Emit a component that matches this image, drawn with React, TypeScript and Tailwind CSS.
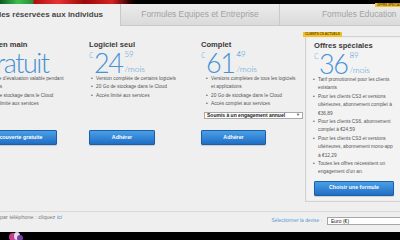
import React from "react";

type Plan = {
  title: string;
  whole: string;
  cents?: string;
  bullets: string[][];
  button: string;
  width: string;
  buttonWidth: string;
  indent: string;
  extra?: React.ReactNode;
};

const plans: Plan[] = [
  {
    title: "Prise en main",
    whole: "Gratuit",
    bullets: [
      ["Période d'évaluation valable pendant", "30 jours"],
      ["2 Go de stockage dans le Cloud"],
      ["Accès limité aux services"],
    ],
    button: "Découverte gratuite",
    width: "w-[111px]",
    buttonWidth: "w-[79px]",
    indent: "ml-[0px]",
  },
  {
    title: "Logiciel seul",
    whole: "24",
    cents: "59",
    bullets: [
      ["Version complète de certains logiciels"],
      ["20 Go de stockage dans le Cloud"],
      ["Accès limité aux services"],
    ],
    button: "Adhérer",
    width: "w-[112px]",
    buttonWidth: "w-[66px]",
    indent: "ml-[0px]",
  },
  {
    title: "Complet",
    whole: "61",
    cents: "49",
    bullets: [
      ["Versions complètes de tous les logiciels", "et applications"],
      ["20 Go de stockage dans le Cloud"],
      ["Accès complet aux services"],
    ],
    button: "Adhérer",
    width: "w-[103px]",
    buttonWidth: "w-[65px]",
    indent: "ml-[3px]",
    extra: (
      <div className="mt-[3px] w-[99px] h-[7px] bg-white border border-[#a9a9a9] flex items-center justify-between px-[2px] text-[5px] leading-none font-bold text-[#222] whitespace-nowrap">
        <span>Soumis à un engagement annuel</span>
        <span className="text-[4px] text-[#555]">▼</span>
      </div>
    ),
  },
];

const special: string[][] = [
  ["Tarif promotionnel pour les clients", "existants"],
  ["Pour les clients CS3 et versions", "ultérieures, abonnement complet à", "€36,89"],
  ["Pour les clients CS6, abonnement", "complet à €24,59"],
  ["Pour les clients CS3 et versions", "ultérieures, abonnement mono-app", "à €12,29"],
  ["Toutes les offres nécessitent un", "engagement d'un an."],
];

function Price({ whole, cents }: { whole: string; cents?: string }) {
  if (!cents) {
    return (
      <div className="h-[25px] text-[#4592d4] font-['Lato',sans-serif] font-light text-[27px] leading-[25px] tracking-[-1.5px] whitespace-nowrap">
        {whole}
      </div>
    );
  }
  return (
    <div className="h-[25px] flex items-start text-[#4592d4] font-['Lato',sans-serif] font-light whitespace-nowrap">
      <span className="text-[7px] leading-none mt-[2px] mr-[1px]">€</span>
      <span className="text-[27px] leading-[25px] tracking-[-1.5px]">{whole}</span>
      <span className="flex flex-col ml-[2px]">
        <span className="text-[8px] leading-[8px]">{cents}</span>
        <span className="text-[8.5px] leading-[9px] mt-[7px]">/mois</span>
      </span>
    </div>
  );
}

function Bullets({ items }: { items: string[][] }) {
  return (
    <ul className="text-[4.8px] leading-[8.4px] text-[#555]">
      {items.map((lines, i) => (
        <li key={i} className="flex">
          <span className="w-[7px] shrink-0 pl-[2px]">•</span>
          <span>
            {lines.map((l, j) => (
              <span key={j} className="block whitespace-nowrap">
                {l}
              </span>
            ))}
          </span>
        </li>
      ))}
    </ul>
  );
}

function BlueButton({ label, width }: { label: string; width: string }) {
  return (
    <div
      className={`${width} h-[15px] shrink-0 rounded-[1px] border border-[#1b5ea8] bg-gradient-to-b from-[#4a9fe6] to-[#1f6ec4] text-white text-[5.3px] font-bold flex items-center justify-center whitespace-nowrap shadow-[0_1px_1px_rgba(0,0,0,0.15)]`}
    >
      {label}
    </div>
  );
}

export default function App() {
  return (
    <div className="relative w-[400px] h-[240px] overflow-hidden bg-[#efefef] font-['Liberation_Sans',Arial,sans-serif]">
      {/* top strip */}
      <div className="h-[4px] bg-[linear-gradient(90deg,#0b5a22_0px,#3fbf4f_18px,#2b8c34_33px,#b01010_34px,#e83232_58px,#9a0808_85px,#d62222_112px,#2a0000_130px,#000_136px)]" />

      {/* tabs */}
      <div className="flex h-[22px]">
        <div className="w-[120px] shrink-0 overflow-hidden flex justify-end items-center pr-[17px] whitespace-nowrap text-[8px] font-bold text-[#474747]">
          Formules réservées aux individus
        </div>
        <div className="w-[159px] shrink-0 flex items-center justify-center border-l border-b border-[#c9c9c9] bg-gradient-to-b from-[#ececec] to-[#dadada] text-[8.4px] text-[#a3a3a3] whitespace-nowrap">
          Formules Equipes et Entreprise
        </div>
        <div className="relative flex-1 flex items-center pl-[42px] border-l border-b border-[#c9c9c9] bg-gradient-to-b from-[#ececec] to-[#dadada] text-[8.4px] text-[#a3a3a3] whitespace-nowrap">
          Formules Education
          <span className="absolute left-[95px] top-[-1px] h-[4px] px-[2px] bg-[#f2c12e] text-[3px] leading-[4px] font-bold text-[#6b4a00]">
            OFFRE SPÉCIALE
          </span>
        </div>
      </div>

      {/* plans */}
      <div className="h-[186px] border-b border-[#d9d9d9]">
        <div className="flex items-start pt-[14px] -ml-[22px]">
          {plans.map((p) => (
            <div key={p.title} className={`${p.width} shrink-0 flex flex-col`}>
              <div className="h-[10px] text-[7.6px] leading-[10px] font-bold text-[#3a3a3a] whitespace-nowrap">
                {p.title}
              </div>
              <Price whole={p.whole} cents={p.cents} />
              <div className={`h-[55px] ${p.indent}`}>
                <Bullets items={p.bullets} />
                {p.extra}
              </div>
              <BlueButton label={p.button} width={p.buttonWidth} />
            </div>
          ))}

          {/* special offers card */}
          <div className="relative ml-[1px] -mt-[4px] w-[110px] h-[166px] shrink-0 bg-[#f3f3f3] border border-[#d2d2d2] shadow-[inset_0_0_3px_rgba(0,0,0,0.06)] pl-[8px] pt-[4px] flex flex-col">
            <span className="absolute -left-[3px] -top-[5px] h-[5px] px-[2px] bg-[#f2c12e] text-[3.2px] leading-[5px] font-bold text-[#6b4a00] whitespace-nowrap">
              CLIENTS CS ACTUELS
            </span>
            <div className="h-[10px] text-[7.6px] leading-[10px] font-bold text-[#3a3a3a] whitespace-nowrap">
              Offres spéciales
            </div>
            <Price whole="36" cents="89" />
            <div className="-ml-[3px]">
              <Bullets items={special} />
            </div>
            <div className="mt-[4px]">
              <BlueButton label="Choisir une formule" width="w-[80px]" />
            </div>
          </div>
        </div>
      </div>

      {/* footer */}
      <div className="h-[20px] flex items-start">
        <div className="mt-[2px] text-[5.5px] leading-[7px] text-[#7a7a7a] whitespace-nowrap">
          par téléphone : cliquez <span className="text-[#3d8fd6]">ici</span>
        </div>
        <div className="ml-auto -mr-[12px] mt-[5px] flex items-center">
          <span className="text-[4.9px] text-[#5b9ad4] mr-[5px] whitespace-nowrap">Sélectionner la devise :</span>
          <div className="w-[85px] h-[8px] bg-white border border-[#a6a6a6] text-[5px] leading-[6px] pl-[3px] text-[#222]">
            Euro (€)
          </div>
        </div>
      </div>

      {/* bottom strip */}
      <div className="relative h-[8px] bg-black">
        <svg className="absolute left-[8px] top-0" width="16" height="8" viewBox="0 0 16 8">
          <ellipse cx="5" cy="5" rx="4" ry="4" fill="#c2408f" />
          <ellipse cx="9" cy="4" rx="3" ry="4" fill="#e8d9f0" />
          <ellipse cx="12" cy="6" rx="3" ry="3" fill="#7a3fa0" />
        </svg>
      </div>
    </div>
  );
}
